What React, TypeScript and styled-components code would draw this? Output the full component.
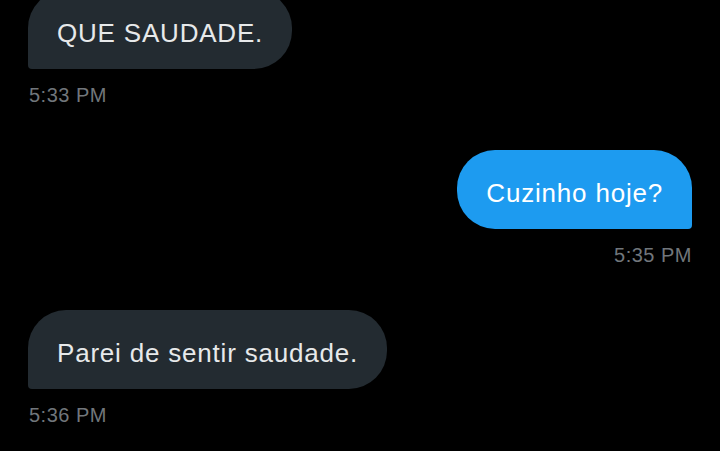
import styled, { createGlobalStyle } from "styled-components"

const GlobalStyle = createGlobalStyle`
  html, body {
    margin: 0;
    padding: 0;
    background: #000;
    overflow: hidden;
  }
  body {
    font-family: "Liberation Sans", Arial, sans-serif;
  }
`

interface Message {
  text: string
  time: string
  mine?: boolean
}

const messages: Message[] = [
  { text: "QUE SAUDADE.", time: "5:33 PM" },
  { text: "Cuzinho hoje?", time: "5:35 PM", mine: true },
  { text: "Parei de sentir saudade.", time: "5:36 PM" },
]

export default function App() {
  return (
    <>
      <GlobalStyle />
      <Thread>
        {messages.map((m, i) => (
          <Entry key={i} $mine={m.mine}>
            <Bubble $mine={m.mine}>{m.text}</Bubble>
            <Time>{m.time}</Time>
          </Entry>
        ))}
      </Thread>
    </>
  )
}

const Thread = styled.div`
  width: 720px;
  height: 451px;
  box-sizing: border-box;
  padding: 0 28px;
  margin-top: -10px;
  display: flex;
  flex-direction: column;
  gap: 43px;
  background: #000;
`

const Entry = styled.div<{ $mine?: boolean }>`
  display: flex;
  flex-direction: column;
  align-items: ${(p) => (p.$mine ? "flex-end" : "flex-start")};
  gap: 14px;
`

const Bubble = styled.div<{ $mine?: boolean }>`
  box-sizing: border-box;
  height: 79px;
  padding: 28px 29px 21px;
  font-size: 26px;
  line-height: 30px;
  letter-spacing: 0.8px;
  white-space: nowrap;
  color: ${(p) => (p.$mine ? "#ffffff" : "#e7e9ea")};
  background: ${(p) => (p.$mine ? "#1d9bf0" : "#232b31")};
  border-radius: ${(p) => (p.$mine ? "38px 38px 4px 38px" : "38px 38px 38px 4px")};
`

const Time = styled.div`
  font-size: 20px;
  line-height: 24px;
  letter-spacing: 0.5px;
  color: #71767b;
  padding: 0 0 0 1px;
`
